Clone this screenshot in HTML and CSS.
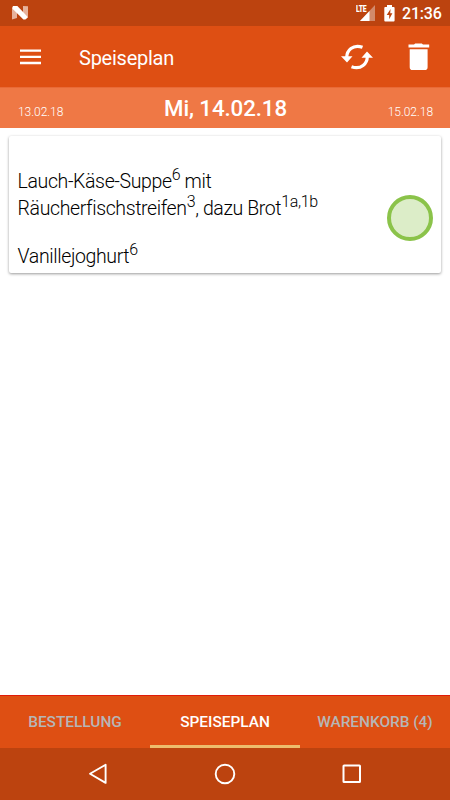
FILE: index.html
```html
<!DOCTYPE html>
<html lang="de">
<head>
<meta charset="utf-8">
<title>Speiseplan</title>
<link rel="stylesheet" href="styles.css">
</head>
<body>
<div class="screen">
  <header class="status">
    <svg class="logo-n" width="17" height="14" viewBox="0 0 17 14"><path d="M0 2.5L5 4v8L0 13.500zM11 0l5 .3V11l-5-1z" fill="#e6b29c"/><path d="M1 0h4.400L16 11.200 13.400 13.500h-2L0 2.200z" fill="#fff"/></svg>
    <div class="status-right">
      <div class="signal">
        <svg width="20" height="17" viewBox="0 0 20 17"><path d="M19 0v16H4z" fill="#d28a6b"/><path d="M13.500 6V16H4z" fill="#fff"/></svg>
        <span class="lte">LTE</span>
      </div>
      <svg class="battery" width="11" height="17" viewBox="0 0 11 17"><path d="M3 0h5v2h1.700q.9 0 .9.900v12.700q0 .9-.9.900H1.200q-.9 0-.9-.9V2.900q0-.9.900-.9H3z" fill="#fff"/><path d="M6.600 4L2.700 10h2.500v4.200L8.400 8.300H6.200z" fill="#bc430f"/></svg>
      <span class="clock">21:36</span>
    </div>
  </header>
  <div class="appbar">
    <svg class="menu" width="21" height="16" viewBox="0 0 21 16"><path d="M0 1.700h21M0 7.900h21M0 14h21" stroke="#fff" stroke-width="2.300"/></svg>
    <h1 class="title">Speiseplan</h1>
    <svg class="refresh" width="32" height="26" viewBox="0 0 32 26"><g fill="none" stroke="#fff" stroke-width="3.200"><path d="M5.700 14C5.500 6.500 12 -.200 21.500 3.300"/><path d="M26.300 12C26.500 19.500 20 26.200 10.500 22.700"/></g><path d="M0 12.300h11.500L6 18.600zM32 13.700H20.500L26 7.400z" fill="#fff"/></svg>
    <svg class="trash" width="22" height="28" viewBox="0 0 22 28"><path d="M.5 1.500H6L7.200.400h6.600L15 1.500h6.200v3H.5zM1.700 6.200h17.900v18q0 2.800-2.800 2.800H4.500q-2.800 0-2.800-2.800z" fill="#fff"/></svg>
  </div>
  <nav class="days">
    <span class="day">13.02.18</span>
    <span class="today">Mi, 14.02.18</span>
    <span class="day next">15.02.18</span>
  </nav>
  <main class="content">
    <article class="card">
      <div class="meal">
        <p>Lauch-Käse-Suppe<sup>6</sup> mit</p>
        <p>Räucherfischstreifen<sup>3</sup>, dazu Brot<sup>1a,1b</sup></p>
        <p class="dessert">Vanillejoghurt<sup>6</sup></p>
      </div>
      <div class="marker"></div>
    </article>
  </main>
  <nav class="tabs">
    <span class="tab">BESTELLUNG</span>
    <span class="tab active">SPEISEPLAN</span>
    <span class="tab">WARENKORB (4)</span>
  </nav>
  <footer class="navbar">
    <svg width="20" height="22" viewBox="0 0 20 22"><path d="M17.600 1.800v18.100L2 10.800z" fill="none" stroke="#fff" stroke-width="1.900" stroke-linejoin="round"/></svg>
    <svg width="22" height="22" viewBox="0 0 22 22"><circle cx="11" cy="11" r="9.300" fill="none" stroke="#fff" stroke-width="1.900"/></svg>
    <svg width="20" height="22" viewBox="0 0 20 22"><rect x="1.500" y="2.500" width="16.500" height="16.500" rx=".6" fill="none" stroke="#fff" stroke-width="2"/></svg>
  </footer>
</div>
</body>
</html>
```
FILE: styles.css
```css
* { box-sizing: border-box; }
body {
  margin: 0;
  font-family: Roboto, sans-serif;
  color: #fff;
}
svg { display: block; flex: none; }
.screen {
  width: 450px;
  height: 800px;
  display: flex;
  flex-direction: column;
  background: #fff;
  overflow: hidden;
}
.status {
  height: 26px;
  flex: none;
  background: #bc430f;
  display: flex;
  justify-content: space-between;
  padding: 5px 8px 0 12px;
}
.logo-n { margin-top: 1px; }
.status-right { display: flex; }
.signal { position: relative; margin-right: 8px; }
.lte {
  position: absolute;
  left: 0;
  top: 0;
  font-size: 9.5px;
  line-height: 8px;
  font-weight: 900;
  letter-spacing: -0.4px;
  transform: scaleX(0.72);
  transform-origin: left;
}
.clock {
  width: 40px;
  margin-left: 7px;
  font-size: 16px;
  font-weight: 500;
  line-height: 18px;
  letter-spacing: -0.2px;
  white-space: nowrap;
}
.appbar {
  height: 61px;
  flex: none;
  background: #de4f13;
  display: flex;
  align-items: center;
  padding: 0 20px;
}
.title {
  margin: 3px auto 0 38px;
  font-size: 20px;
  font-weight: 400;
  line-height: 24px;
  letter-spacing: -0.25px;
}
.refresh { margin-right: 35px; }
.days {
  height: 41px;
  flex: none;
  background: #ef7845;
  border-top: 1px solid #e96a37;
  display: grid;
  grid-template-columns: 1fr auto 1fr;
  align-items: baseline;
  padding: 6px 17px 0 18px;
}
.day { font-size: 12px; font-weight: 300; letter-spacing: -0.05px; }
.next { text-align: right; }
.today { font-size: 22.3px; font-weight: 500; line-height: 28px; letter-spacing: -0.1px; }
.content { flex: 1; padding: 8px 9px; }
.card {
  height: 137px;
  border-radius: 2px;
  box-shadow: 0 1px 3px rgba(0, 0, 0, 0.4);
  display: flex;
  justify-content: space-between;
  padding: 32px 8px 0 8.6px;
  color: #000;
}
.meal { padding-top: 1px; font-size: 19.5px; font-weight: 300; letter-spacing: -0.38px; }
.meal p { margin: 0; line-height: 26.5px; white-space: nowrap; }
.meal .dessert { margin-top: 22px; }
sup { font-size: 16px; line-height: 0; vertical-align: 8.5px; }
.marker {
  width: 46px;
  height: 46px;
  margin-top: 27px;
  border: 4px solid #8bc34a;
  border-radius: 50%;
  background: #dcedc8;
}
.tabs {
  height: 53px;
  flex: none;
  background: #de4f13;
  border-top: 1px solid #e01b08;
  display: grid;
  grid-template-columns: repeat(3, 1fr);
}
.tab {
  font-size: 15.4px;
  font-weight: 500;
  line-height: 52px;
  text-align: center;
  color: #b6b6b6;
  white-space: nowrap;
}
.active { color: #fff; box-shadow: inset 0 -3px #edbd6c; }
.navbar {
  height: 52px;
  flex: none;
  background: #bc430f;
  display: flex;
  justify-content: space-between;
  align-items: center;
  padding: 0 88px;
}
```
